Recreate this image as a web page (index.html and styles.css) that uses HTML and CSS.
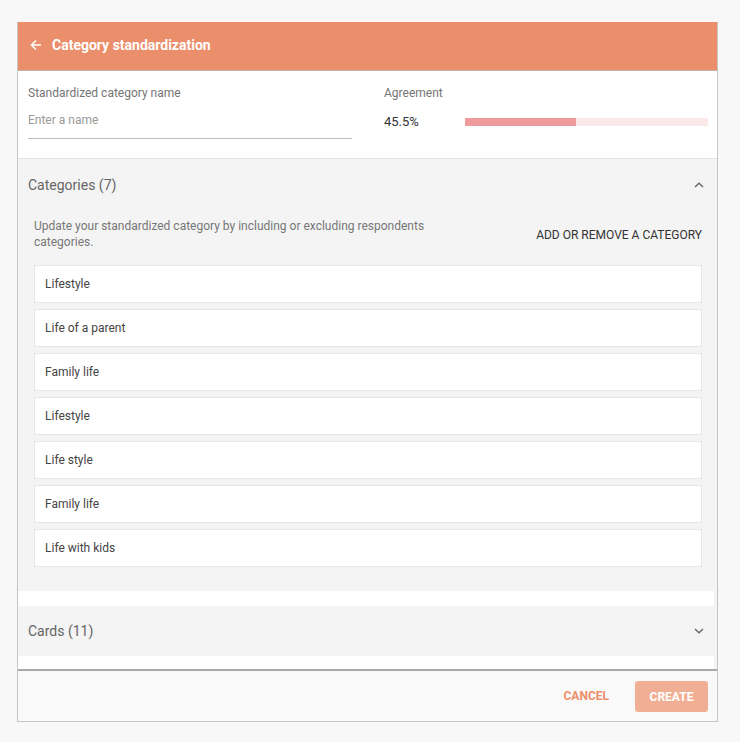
FILE: index.html
```html
<!DOCTYPE html>
<html>
<head>
<meta charset="utf-8">
<link rel="stylesheet" href="styles.css">
</head>
<body>
<div class="dialog">
  <div class="header">
    <svg class="back" width="12" height="12" viewBox="0 0 12 12"><path d="M11 6H2M6 1.5L1.5 6 6 10.5" fill="none" stroke="#fff" stroke-width="1.6"/></svg>
    <span class="title">Category standardization</span>
  </div>
  <div class="top">
    <div class="col-name">
      <div class="label">Standardized category name</div>
      <div class="input">Enter a name</div>
    </div>
    <div class="col-agree">
      <div class="label">Agreement</div>
      <div class="agree-row">
        <span class="value">45.5%</span>
        <div class="bar"><div class="fill" style="width:45.5%"></div></div>
      </div>
    </div>
  </div>
  <div class="scroll">
    <div class="panel">
      <div class="panel-head">
        <span>Categories (7)</span>
        <svg width="10" height="6" viewBox="0 0 10 6"><path d="M1 5L5 1.2 9 5" fill="none" stroke="#666" stroke-width="1.5"/></svg>
      </div>
      <div class="panel-body">
        <div class="desc-row">
          <p class="desc">Update your standardized category by including or excluding respondents categories.</p>
          <span class="link">ADD OR REMOVE A CATEGORY</span>
        </div>
        <div class="list">
          <div class="item">Lifestyle</div>
          <div class="item">Life of a parent</div>
          <div class="item">Family life</div>
          <div class="item">Lifestyle</div>
          <div class="item">Life style</div>
          <div class="item">Family life</div>
          <div class="item">Life with kids</div>
        </div>
      </div>
    </div>
    <div class="panel collapsed">
      <div class="panel-head short">
        <span>Cards (11)</span>
        <svg width="10" height="6" viewBox="0 0 10 6"><path d="M1 1L5 4.8 9 1" fill="none" stroke="#666" stroke-width="1.5"/></svg>
      </div>
    </div>
  </div>
  <div class="footer">
    <button class="btn-cancel">CANCEL</button>
    <button class="btn-create">CREATE</button>
  </div>
</div>
</body>
</html>
```

FILE: styles.css
```css
* { box-sizing: border-box; }
body {
  margin: 0;
  background: #f8f8f8;
  font-family: Roboto, "Liberation Sans", sans-serif;
}
.dialog {
  margin: 22px 0 0 17px;
  width: 701px;
  height: 700px;
  border: 1px solid #c6c6c6;
  border-top: none;
  display: flex;
  flex-direction: column;
  background: #fff;
}
.header {
  height: 49px;
  background: #eb8e6b;
  border-bottom: 1px solid #c2b3ad;
  display: flex;
  align-items: center;
  padding: 0 0 2px 12px;
  flex-shrink: 0;
}
.back { margin-right: 10px; }
.title {
  color: #fff;
  font-weight: 700;
  font-size: 14px;
}
.top {
  height: 88px;
  flex-shrink: 0;
  display: flex;
  padding: 14px 9px 0 10px;
  border-bottom: 1px solid #e2e2e2;
}
.label {
  font-size: 12px;
  line-height: 16px;
  color: #757575;
}
.col-name { width: 324px; }
.input {
  font-size: 12px;
  line-height: 16px;
  color: #9a9a9a;
  padding: 11px 0 10px;
  border-bottom: 1px solid #bdbdbd;
}
.col-agree {
  flex: 1;
  margin-left: 32px;
}
.agree-row {
  display: flex;
  align-items: center;
  height: 40px;
}
.value {
  width: 81px;
  font-size: 13px;
  color: #333;
}
.bar {
  flex: 1;
  height: 8px;
  background: #fbe9e9;
  margin-top: 2px;
}
.fill {
  height: 100%;
  background: #ee9b9b;
}
.scroll {
  flex: 1;
  overflow: hidden;
  border-right: 3px solid #f4f4f4;
}
.panel {
  background: #f4f4f4;
}
.panel.collapsed { margin-top: 15px; }
.panel-head {
  height: 52px;
  display: flex;
  align-items: center;
  justify-content: space-between;
  padding: 0 10px 0 10px;
  font-size: 14px;
  color: #666;
}
.panel-head.short { height: 50px; padding-bottom: 1px; }
.panel-body {
  padding: 7px 12px 24px 16px;
}
.desc-row {
  display: flex;
  align-items: center;
  justify-content: space-between;
}
.desc {
  margin: 0;
  max-width: 400px;
  font-size: 12px;
  line-height: 16px;
  color: #777;
}
.link {
  font-size: 12px;
  color: #333;
  margin-top: 2px;
}
.list {
  margin-top: 15px;
  display: flex;
  flex-direction: column;
  gap: 6px;
}
.item {
  height: 38px;
  background: #fff;
  border: 1px solid #e6e6e6;
  display: flex;
  align-items: center;
  padding: 0 10px;
  font-size: 12px;
  color: #444;
}
.footer {
  height: 52px;
  flex-shrink: 0;
  background: #f9f9f9;
  border-top: 2px solid #a9a9a9;
  display: flex;
  align-items: center;
  justify-content: flex-end;
  padding: 0 9px 0 0;
}
.footer button {
  font-family: Roboto, "Liberation Sans", sans-serif;
  font-size: 12px;
  font-weight: 700;
  border: none;
  cursor: pointer;
}
.btn-cancel {
  background: transparent;
  color: #ee8f6b;
  padding: 0 12px;
  margin-right: 14px;
}
.btn-create {
  background: #f0af95;
  color: #fff;
  width: 73px;
  height: 31px;
  border-radius: 3px;
  margin-top: 1px;
}
```
